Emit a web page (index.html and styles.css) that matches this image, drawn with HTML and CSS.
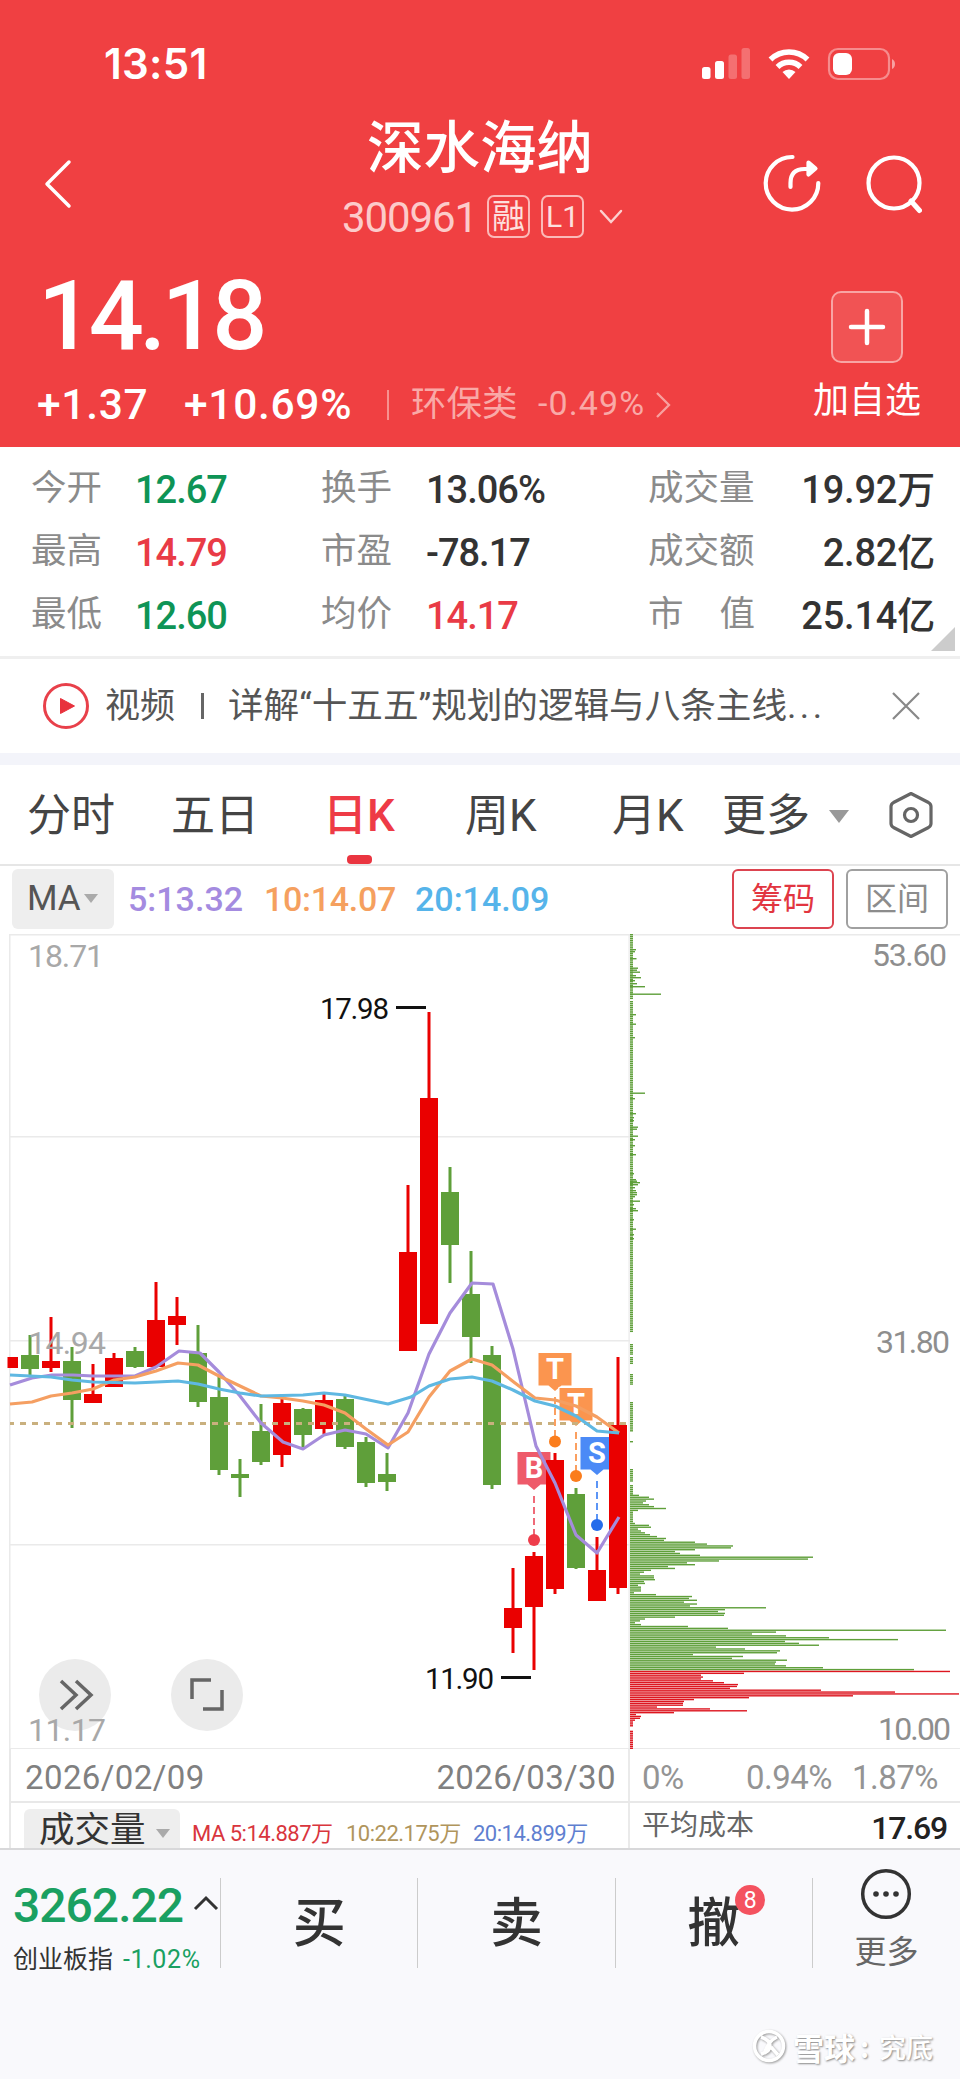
FILE: index.html
```html
<!DOCTYPE html>
<html lang="zh-CN">
<head>
    <meta charset="UTF-8">
    <meta name="viewport" content="width=device-width, initial-scale=1.0">
    <title>深水海纳 300961</title>
    <link rel="stylesheet" href="styles.css">
</head>
<body>
    <header>
        <div class="status-bar">
            <span class="clock">13:51</span>
            <svg class="status-icons" width="196" height="36" viewBox="700 46 196 36" fill="#fff">
                <rect x="702" y="67" width="8.500" height="12" rx="2.5"/>
                <rect x="715" y="61" width="9" height="18" rx="2.5"/>
                <rect x="728.500" y="54.500" width="8.500" height="24.500" rx="2.500" opacity="0.25"/>
                <rect x="741.500" y="48" width="8.500" height="31" rx="2.500" opacity="0.25"/>
                <path d="M789 79l-6.500-7a9.500 9.500 0 0 1 13 0z"/>
                <path d="M777.500 67a16.500 16.500 0 0 1 23 0M770.500 59.500a26.500 26.500 0 0 1 37 0" fill="none" stroke="#fff" stroke-width="5.500"/>
                <rect x="829" y="49" width="60" height="30" rx="9" fill="none" stroke="#fff" stroke-width="2.200" opacity="0.4"/>
                <rect x="833" y="53" width="19" height="22" rx="6"/>
                <path d="M892 59q3 1.500 3 5t-3 5z" opacity="0.5"/>
            </svg>
        </div>
        <div class="title-bar">
            <svg class="back" width="32" height="54" viewBox="0 0 32 54" fill="none" stroke="#fff" stroke-width="3.500" stroke-linecap="round" stroke-linejoin="round"><path d="M27 5L5 27l22 22"/></svg>
            <div class="stock">
                <h1>深水海纳</h1>
                <div class="stock-code">
                    <span class="code">300961</span>
                    <span class="tag">融</span>
                    <span class="tag tag-l1">L1</span>
                    <svg width="26" height="18" viewBox="0 0 26 18" fill="none" stroke="#fcd0cf" stroke-width="2.500" stroke-linecap="round"><path d="M3 3l10 11L23 3"/></svg>
                </div>
            </div>
            <svg class="tools" width="160" height="64" viewBox="762 152 160 64" fill="none" stroke="#fff" stroke-width="4.200" stroke-linecap="round" stroke-linejoin="round">
                <path d="M792.500 157a26.300 26.300 0 1 0 25.800 26"/>
                <path d="M790.500 187v-4q0-14 14-14h7M808.500 162.500l7 6-7 6z"/>
                <circle cx="894" cy="183" r="25.500"/>
                <path d="M911 201l8.500 9.500" stroke-width="5"/>
            </svg>
        </div>
        <div class="quote">
            <div class="price-box">
                <div class="price">14.18</div>
                <div class="change">
                    <span class="diff">+1.37</span>
                    <span class="percent">+10.69%</span>
                    <span class="line"></span>
                    <span class="sector">环保类</span>
                    <span class="sector-change">-0.49%</span>
                    <svg width="18" height="28" viewBox="0 0 18 28" fill="none" stroke="#f8a09f" stroke-width="2.300"><path d="M3 2l12 12L3 26"/></svg>
                </div>
            </div>
            <div class="add">
                <div class="add-icon">
                    <svg width="40" height="40" viewBox="0 0 40 40" stroke="#fff" stroke-width="4.500" stroke-linecap="round"><path d="M20 4v32M4 20h32"/></svg>
                </div>
                <span>加自选</span>
            </div>
        </div>
    </header>

    <section class="stats">
        <span class="label">今开</span><span class="value green">12.67</span>
        <span class="label">换手</span><span class="value">13.06%</span>
        <span class="label">成交量</span><span class="value right">19.92万</span>
        <span class="label">最高</span><span class="value red">14.79</span>
        <span class="label">市盈</span><span class="value">-78.17</span>
        <span class="label">成交额</span><span class="value right">2.82亿</span>
        <span class="label">最低</span><span class="value green">12.60</span>
        <span class="label">均价</span><span class="value red">14.17</span>
        <span class="label spread"><i>市</i><i>值</i></span><span class="value right">25.14亿</span>
        <span class="corner"></span>
    </section>

    <section class="video">
        <svg width="48" height="48" viewBox="0 0 48 48"><circle cx="24" cy="24" r="21.500" fill="none" stroke="#e8404a" stroke-width="3"/><path d="M18.500 16.500v15l14-7.500z" fill="#e8323d" stroke="#e8323d" stroke-linejoin="round"/></svg>
        <span class="video-tag">视频</span>
        <span class="video-line"></span>
        <span class="video-title">详解“十五五”规划的逻辑与八条主线<i>...</i></span>
        <svg width="30" height="30" viewBox="0 0 30 30" stroke="#888" stroke-width="2.200"><path d="M2 2l26 26M28 2L2 28"/></svg>
    </section>

    <nav class="tabs">
        <span>分时</span>
        <span>五日</span>
        <span class="active">日K</span>
        <span>周K</span>
        <span>月K</span>
        <span class="more">更多<i class="arrow"></i></span>
        <svg width="48" height="50" viewBox="0 0 48 50" fill="none" stroke="#666" stroke-width="3.200" stroke-linejoin="round"><path d="M24 3.500l17.500 9q2.500 1.500 2.500 4v17q0 2.500-2.500 4L24 46.500l-17.500-9Q4 36 4 33.500v-17q0-2.500 2.500-4z"/><circle cx="24" cy="25" r="6.500"/></svg>
    </nav>

    <section class="ma-row">
        <span class="ma-select">MA<i class="arrow"></i></span>
        <span class="ma ma5">5:13.32</span>
        <span class="ma ma10">10:14.07</span>
        <span class="ma ma20">20:14.09</span>
        <span class="btn btn-red">筹码</span>
        <span class="btn">区间</span>
    </section>

    <svg class="chart" id="chart" width="960" height="815" viewBox="0 934 960 815">
        <g fill="#eaeaea">
            <rect x="9" y="934" width="951" height="1.500"/>
            <rect x="9" y="1136" width="621" height="1.500"/>
            <rect x="9" y="1340" width="621" height="1.500"/>
            <rect x="9" y="1544" width="621" height="1.500"/>
            <rect x="9" y="1748" width="951" height="1"/>
            <rect x="9" y="934" width="1.500" height="815"/>
            <rect x="628.500" y="934" width="1.200" height="815"/>
        </g>
        <circle cx="75" cy="1695" r="36" fill="#ebebeb"/>
        <circle cx="207" cy="1695" r="36" fill="#ebebeb"/>
        <path class="tool-line" d="M61 1681l15 14-15 14M76 1681l15 14-15 14"/>
        <path class="tool-line" d="M192 1699v-19h19M222 1690v19h-19"/>
        <g id="markers"></g>
        <g id="candles"></g>
        <path d="M10 1423.500H627" stroke="#c9b07e" stroke-width="3" stroke-dasharray="6 6" stroke-dashoffset="2" fill="none"/>
        <g id="lines" fill="none" stroke-width="3.200" stroke-linejoin="round"></g>
        <g id="chips"></g>
        <path d="M396 1007.500h30M501 1677.500h30" stroke="#111" stroke-width="3"/>
        <g class="mark">
            <text x="320" y="1019" textLength="69">17.98</text>
            <text x="425" y="1689" textLength="69">11.90</text>
        </g>
        <g class="axis">
            <text x="28" y="967" textLength="76">18.71</text>
            <text x="28" y="1354" textLength="78">14.94</text>
            <text x="28" y="1741" textLength="78">11.17</text>
        </g>
        <g class="axis axis-right">
            <text x="872" y="966" textLength="75">53.60</text>
            <text x="876" y="1353" textLength="74">31.80</text>
            <text x="878" y="1740" textLength="73">10.00</text>
        </g>
    </svg>

    <section class="dates">
        <div class="dates-left"><span>2026/02/09</span><span>2026/03/30</span></div>
        <div class="dates-right"><span>0%</span><span>0.94%</span><span>1.87%</span></div>
    </section>

    <section class="volume">
        <div class="volume-left">
            <span class="volume-select">成交量<i class="arrow"></i></span>
            <span class="vol v5">MA 5:14.887万</span>
            <span class="vol v10">10:22.175万</span>
            <span class="vol v20">20:14.899万</span>
        </div>
        <div class="volume-right"><span>平均成本</span><b>17.69</b></div>
    </section>

    <footer>
        <div class="actions">
            <div class="index">
                <div class="index-value">3262.22<svg width="26" height="16" viewBox="0 0 26 16" fill="none" stroke="#333" stroke-width="3"><path d="M2 14L13 3l11 11"/></svg></div>
                <div class="index-name">创业板指<span>-1.02%</span></div>
            </div>
            <div class="action">买</div>
            <div class="action">卖</div>
            <div class="action"><span class="cancel">撤<em>8</em></span></div>
            <div class="action-more">
                <svg width="52" height="52" viewBox="0 0 52 52" fill="#333"><circle cx="26" cy="26" r="23.300" fill="none" stroke="#333" stroke-width="3.500"/><circle cx="16" cy="26" r="2.800"/><circle cx="26" cy="26" r="2.800"/><circle cx="36" cy="26" r="2.800"/></svg>
                <span>更多</span>
            </div>
        </div>
        <div class="brand">
            <svg width="38" height="38" viewBox="0 0 38 38" fill="none"><circle cx="19" cy="19" r="14.500" stroke="#fff" stroke-width="3.500"/><path d="M11 10q9 3 9 9t-9 8M27 10q-9 4-13 17M21 20l7 8" stroke="#fff" stroke-width="3.500"/></svg>
            <span class="brand-name">雪球</span><span class="brand-colon">:</span><span class="brand-user">究底</span>
        </div>
    </footer>

    <script>
        const RED = "#ea0000";
        const GREEN = "#5f9f3a";

        function add(parent, name, attrs) {
            const el = document.createElementNS("http://www.w3.org/2000/svg", name);
            for (const key in attrs) el.setAttribute(key, attrs[key]);
            document.getElementById(parent).appendChild(el);
            return el;
        }

        // color, high, low, body top, body bottom
        const candles = [
            ["r", 1357, 1368, 1357, 1368], ["g", 1335, 1375, 1355, 1369], ["r", 1317, 1372, 1361, 1368],
            ["g", 1347, 1428, 1361, 1400], ["r", 1364, 1403, 1394, 1403], ["r", 1353, 1387, 1358, 1387],
            ["g", 1347, 1368, 1351, 1367], ["r", 1282, 1367, 1320, 1367], ["r", 1297, 1345, 1316, 1325],
            ["g", 1325, 1407, 1353, 1402], ["g", 1375, 1475, 1397, 1470], ["g", 1459, 1497, 1474, 1478],
            ["g", 1404, 1465, 1431, 1462], ["r", 1399, 1467, 1403, 1455], ["g", 1408, 1447, 1409, 1435],
            ["r", 1394, 1434, 1400, 1429], ["g", 1395, 1449, 1399, 1447], ["g", 1437, 1487, 1442, 1483],
            ["g", 1453, 1491, 1474, 1482], ["r", 1185, 1351, 1252, 1351], ["r", 1012, 1324, 1098, 1324],
            ["g", 1167, 1283, 1192, 1245], ["g", 1251, 1363, 1294, 1337], ["g", 1346, 1489, 1355, 1485],
            ["r", 1568, 1653, 1608, 1628], ["r", 1552, 1670, 1556, 1607], ["r", 1453, 1594, 1460, 1589],
            ["g", 1488, 1569, 1494, 1568], ["r", 1537, 1601, 1570, 1601], ["r", 1357, 1594, 1425, 1588]
        ];
        candles.forEach((c, i) => {
            const x = 9 + i * 21;
            const left = Math.max(x - 9, 9);
            const fill = c[0] === "r" ? RED : GREEN;
            add("candles", "rect", { x: x - 1.5, y: c[1], width: 3, height: c[2] - c[1], fill: fill });
            add("candles", "rect", { x: left, y: c[3], width: x + 9 - left, height: c[4] - c[3], fill: fill });
        });

        // MA lines
        const lines = {
            "#a58cdb": "10,1385 32,1378 52,1375 73,1375 93,1376 135,1376 156,1367 179,1351 200,1353 219,1372 240,1396 261,1423 283,1442 303,1449 324,1435 345,1430 366,1434 388,1448 408,1413 429,1354 450,1313 472,1283 493,1284 513,1349 536,1446 555,1483 576,1535 597,1553 619,1517",
            "#f59f62": "10,1404 32,1402 51,1396 72,1393 93,1389 114,1380 135,1377 156,1371 178,1363 198,1365 219,1376 240,1386 261,1396 282,1398 303,1401 324,1405 345,1413 366,1429 388,1445 408,1432 429,1397 450,1371 472,1359 492,1365 515,1383 535,1398 555,1400 576,1406 597,1417 619,1433",
            "#5fb8e2": "10,1375 51,1377 72,1380 93,1382 135,1383 178,1381 198,1384 219,1389 240,1393 261,1396 303,1395 324,1393 345,1395 388,1404 411,1397 429,1386 450,1379 472,1377 492,1381 513,1390 535,1401 555,1406 576,1416 597,1431 619,1433"
        };
        for (const color in lines) add("lines", "polyline", { points: lines[color], stroke: color });

        // trade markers: letter, x, flag top, dot y, flag color, dot color
        const markers = [
            ["B", 534, 1452, 1540, "#ee5a6a", "#ee3d4b"],
            ["T", 555, 1353, 1441.5, "#fb954f", "#fb7d1c"],
            ["T", 576, 1388, 1476, "#fb954f", "#fb7d1c"],
            ["S", 597, 1437, 1525, "#4b8af6", "#256ceb"]
        ];
        markers.forEach(m => {
            const x = m[1], y = m[2];
            add("markers", "path", {
                d: `M${x - 16.5} ${y}h33v32.500h-10l-6.500 5.500l-6.500-5.500h-10z`,
                fill: m[4], stroke: "#fff", "stroke-width": 2.5, "stroke-linejoin": "round", "paint-order": "stroke"
            });
            add("markers", "path", { d: `M${x} ${y + 44}V${m[3] - 4}`, stroke: m[4], "stroke-width": 1.8, "stroke-dasharray": "7 4" });
            add("markers", "circle", { cx: x, cy: m[3], r: 6, fill: m[5] });
            const t = add("markers", "text", { x: x, y: y + 26, class: "flag" });
            t.textContent = m[0];
        });

        // chips distribution
        const STEP = 1.873;
        function chip(y, w, color) {
            add("chips", "rect", { x: 630, y: y, width: w, height: 1.4, fill: color });
        }
        const ranges = [[934, 998], [1001, 1331], [1344, 1355], [1357, 1363], [1374, 1384], [1402, 1431], [1441, 1442], [1469, 1482], [1485, 1495]];
        ranges.forEach(r => {
            for (let y = r[0]; y < r[1]; y += STEP) chip(y, 3, GREEN);
        });
        const spikes = [
            [949, 6], [951, 5], [958, 6.5], [967.5, 8], [969.5, 7], [971.5, 10], [975, 6], [977, 11], [980, 5], [983, 7],
            [986, 15], [993.5, 31], [1014, 6], [1023.5, 6], [1037, 5], [1092.5, 15], [1098, 5], [1113, 6], [1117, 4],
            [1120, 4], [1126.5, 8], [1128.5, 7], [1135.5, 8], [1139, 5], [1145, 5], [1154, 6], [1173, 4], [1179, 6],
            [1180.5, 7], [1182, 10], [1184, 8], [1187, 5], [1190, 6], [1192, 7], [1194, 7], [1196, 5], [1200.5, 10],
            [1204, 4], [1208, 6], [1210, 8], [1219, 4], [1228.5, 6], [1234, 4], [1238, 4]
        ];
        spikes.forEach(s => chip(s[0], s[1], GREEN));

        const above = [9, 19, 24, 16, 13, 19, 24, 36, 8, 3, 3, 3, 3, 3, 3, 5, 19, 21, 8, 11, 15, 20, 27, 36, 34, 65, 77, 103, 101,
            65, 45, 50, 70, 183, 178, 89, 57, 65, 38, 45, 21, 14, 10, 24, 24, 25, 14, 15, 8, 11, 11, 11, 4, 26, 62, 59, 67,
            54, 67, 60, 136, 95, 88, 95, 94, 45, 15, 10, 5, 11, 58, 98, 316, 146, 122, 156, 199, 268, 155, 169, 189, 86,
            115, 150, 147, 63, 113, 102, 157, 146, 145, 156, 193, 284];
        const below = [320, 114, 71, 73, 71, 83, 94, 108, 107, 100, 191, 265, 329, 223, 119, 64, 54, 53, 53, 27, 80, 117, 44, 6,
            11, 10, 5, 3, 3, 3, 0, 0, 3, 3, 3, 3, 3, 3, 3, 3, 3, 3, 3];
        above.forEach((w, i) => chip(1494.7 + i * STEP, w, GREEN));
        below.forEach((w, i) => chip(1494.7 + (above.length + i) * STEP, w, "#dd1620"));
    </script>
</body>
</html>
```

FILE: styles.css
```css
* {
    box-sizing: border-box;
}
body {
    margin: 0;
    width: 960px;
    background: #fff;
    color: #333;
    font-family: Roboto, "Noto Sans CJK SC", sans-serif;
    line-height: 1;
}
i, em {
    font-style: normal;
}
span {
    white-space: nowrap;
}
header {
    height: 447px;
    background: #f04042;
    color: #fff;
}
.status-bar {
    display: flex;
    justify-content: space-between;
    align-items: center;
    height: 128px;
    padding: 0 64px 0 104px;
}
.clock {
    font-family: Inter, sans-serif;
    font-size: 42px;
    font-weight: 600;
    letter-spacing: 0.300px;
}
.title-bar {
    display: grid;
    grid-template-columns: 330px 1fr 160px;
    height: 144px;
    padding: 0 38px 0 42px;
}
.title-bar .back {
    margin-top: 29px;
}
.title-bar .tools {
    margin-top: 24px;
}
.stock {
    width: 400px;
    margin-left: -92px;
}
h1 {
    margin: -13px 0 0;
    text-align: center;
    font-family: "Noto Sans CJK SC", sans-serif;
    font-size: 56.500px;
    font-weight: 500;
}
.stock-code {
    display: flex;
    align-items: center;
    margin: 23px 0 0 62px;
    height: 44px;
}
.code {
    width: 145px;
    padding-top: 3px;
    font-size: 42px;
    letter-spacing: -1.100px;
    color: #fccbca;
}
.tag {
    display: flex;
    align-items: center;
    justify-content: center;
    width: 43px;
    height: 43px;
    margin-right: 11px;
    border: 2px solid #fbb9b8;
    border-radius: 7px;
    font-size: 33px;
    color: #fde0df;
}
.tag-l1 {
    font-size: 30px;
    margin-right: 14px;
}
.quote {
    display: flex;
    justify-content: space-between;
    padding: 0 39px 0 37px;
}
.price {
    margin: -4px 0 0 1px;
    font-size: 97px;
    font-weight: 500;
    letter-spacing: -4.500px;
}
.change {
    display: flex;
    align-items: center;
    height: 44px;
    margin-top: 18px;
}
.diff, .percent {
    font-size: 42.500px;
    font-weight: 500;
    letter-spacing: 0.700px;
}
.diff {
    width: 147px;
}
.percent {
    width: 203px;
}
.line {
    width: 2px;
    height: 30px;
    margin-right: 22px;
    background: #f7918f;
}
.sector {
    width: 127px;
    font-size: 35.500px;
    color: #f9a9a7;
}
.sector-change {
    width: 116px;
    padding-bottom: 4px;
    font-size: 34px;
    letter-spacing: 1.100px;
    color: #f9a9a7;
}
.add {
    display: flex;
    flex-direction: column;
    align-items: center;
    padding-top: 19px;
    font-size: 36px;
}
.add-icon {
    display: flex;
    align-items: center;
    justify-content: center;
    width: 72px;
    height: 72px;
    margin: 0 0 20px 0;
    border: 2px solid #f8a5a4;
    border-radius: 10px;
    background: #f15354;
}
.stats {
    position: relative;
    display: grid;
    grid-template-columns: 104px 186px 105px 222px 119px 1fr;
    grid-auto-rows: 63px;
    align-items: center;
    height: 212px;
    padding: 10px 25px 0 31px;
    border-bottom: 3px solid #efefef;
}
.label {
    font-size: 35.500px;
    color: #8b8b8b;
}
.spread {
    display: flex;
    justify-content: space-between;
    width: 107px;
}
.value {
    font-size: 38px;
    font-weight: 500;
    letter-spacing: -1px;
    padding-top: 3px;
}
.right {
    letter-spacing: -0.200px;
    text-align: right;
}
.green {
    color: #0e9456;
}
.red {
    color: #e93b46;
}
.corner {
    position: absolute;
    right: 5px;
    bottom: 5px;
    border-left: 24px solid transparent;
    border-bottom: 24px solid #ccc;
}
.video {
    display: flex;
    align-items: center;
    height: 94px;
    padding-left: 42px;
    font-size: 35px;
    color: #555;
}
.video-tag {
    margin-left: 15px;
}
.video-line {
    width: 3px;
    height: 26px;
    margin: 0 24px 0 26px;
    background: #666;
}
.video-title {
    width: 663px;
    padding-top: 2px;
    font-size: 35.600px;
}
.video-title i {
    letter-spacing: 3.500px;
}
.tabs {
    display: grid;
    grid-template-columns: 144px 152px 142px 147px 110px 165px 1fr;
    align-items: center;
    height: 113px;
    padding: 0 0 0 27px;
    border-top: 12px solid #f3f4fa;
    border-bottom: 2px solid #e6e6e6;
    font-size: 44px;
    color: #444;
}
.tabs span {
    position: relative;
    top: 1px;
}
.active {
    color: #ee3b46;
    font-weight: 500;
}
.active::after {
    content: "";
    position: absolute;
    left: 24px;
    bottom: -26px;
    width: 25px;
    height: 9px;
    border-radius: 4px;
    background: #ea3540;
}
.arrow {
    display: inline-block;
    border: 7px solid transparent;
    border-top: 9px solid #aaa;
    border-bottom: 0;
}
.more .arrow {
    margin: 0 0 8px 19px;
    border-width: 13px 10px 0;
    border-top-color: #999;
}
.ma-row {
    display: flex;
    align-items: center;
    height: 68px;
    padding: 0 12px 3px;
}
.ma-select {
    display: flex;
    align-items: center;
    width: 102px;
    height: 60px;
    margin-right: 14px;
    padding-left: 15px;
    border-radius: 6px;
    background: #eee;
    font-size: 35px;
    color: #555;
}
.ma-select .arrow {
    margin-left: 3px;
}
.ma {
    padding-top: 1px;
    font-size: 34px;
    font-weight: 500;
}
.ma5 {
    width: 136px;
    color: #a48be0;
}
.ma10 {
    width: 151px;
    letter-spacing: -0.300px;
    color: #f5a05f;
}
.ma20 {
    width: 317px;
    color: #56b4ea;
}
.btn {
    display: flex;
    align-items: center;
    justify-content: center;
    flex-shrink: 0;
    width: 102px;
    height: 60px;
    border: 2px solid #a0a0a0;
    border-radius: 6px;
    font-size: 32px;
    color: #8c8c8c;
}
.btn-red {
    margin-right: 12px;
    border-color: #dc4450;
    color: #e23540;
}
.chart {
    display: block;
}
.tool-line {
    fill: none;
    stroke: #666;
    stroke-width: 3.500px;
}
.flag {
    fill: #fff;
    font-size: 29px;
    font-weight: 700;
    text-anchor: middle;
}
.mark {
    font-size: 29.500px;
    fill: #111;
}
.axis {
    font-size: 32px;
    fill: #a8a8a8;
}
.axis-right {
    fill: #8e8e8e;
}
.dates {
    display: flex;
    height: 54px;
    margin-left: 9px;
    border-bottom: 2px solid #e8e8e8;
    border-left: 2px solid #e8e8e8;
    font-size: 33px;
    color: #808080;
}
.dates-left {
    display: flex;
    align-items: center;
    justify-content: space-between;
    width: 619px;
    padding: 4px 12px 0 14px;
    border-right: 2px solid #eaeaea;
    letter-spacing: 0.400px;
}
.dates-right {
    display: grid;
    grid-template-columns: 104px 106px 1fr;
    align-items: center;
    padding: 4px 0 0 12px;
    color: #949494;
}
.dates-right span {
    letter-spacing: -0.500px;
}
.volume {
    display: flex;
    height: 45px;
    margin-left: 9px;
    border-left: 2px solid #e8e8e8;
}
.volume-left {
    display: flex;
    width: 619px;
    padding: 6px 0 0 13px;
    border-right: 2px solid #eaeaea;
}
.volume-select {
    width: 156px;
    height: 39px;
    margin-right: 12px;
    padding: 4px 0 0 15px;
    border-radius: 6px 6px 0 0;
    background: #eee;
    font-size: 35.500px;
    line-height: 35px;
}
.volume-select .arrow {
    margin: 0 0 4px 10px;
}
.vol {
    padding-top: 14px;
    font-size: 22px;
    letter-spacing: -0.500px;
}
.v5 {
    width: 154px;
    color: #d9353d;
}
.v10 {
    width: 127px;
    color: #b0955c;
}
.v20 {
    color: #5f7fd0;
}
.volume-right {
    display: flex;
    flex: 1;
    justify-content: space-between;
    padding: 9px 13px 0 12px;
    font-size: 28px;
    color: #666;
}
.volume-right b {
    font-size: 32px;
    font-weight: 500;
    letter-spacing: -1.200px;
    color: #222;
}
footer {
    height: 231px;
    border-top: 2px solid #d8d8da;
    background: #f9f9fc;
}
.actions {
    display: flex;
    height: 118px;
    padding-top: 28px;
}
.index {
    width: 221px;
    padding-left: 13px;
    border-right: 1px solid #ccc;
}
.index-value {
    display: flex;
    padding-top: 4px;
    font-size: 48px;
    font-weight: 500;
    letter-spacing: -1px;
    color: #1aa061;
}
.index-value svg {
    flex-shrink: 0;
    margin: 13px 0 0 10px;
}
.index-name {
    display: flex;
    align-items: center;
    margin-top: 17px;
    font-size: 25px;
    color: #333;
}
.index-name span {
    margin-left: 10px;
    letter-spacing: 0.600px;
    color: #1aa061;
}
.action {
    display: flex;
    align-items: center;
    justify-content: center;
    width: 197.300px;
    padding-top: 2px;
    border-right: 1px solid #ccc;
    font-size: 53px;
    font-weight: 500;
}
.cancel {
    position: relative;
}
.cancel em {
    position: absolute;
    top: -13px;
    right: -25px;
    width: 30px;
    height: 30px;
    border-radius: 50%;
    background: #f4525f;
    color: #fff;
    font-size: 23px;
    font-weight: 400;
    line-height: 31px;
    text-align: center;
}
.action-more {
    flex: 1;
    display: flex;
    flex-direction: column;
    align-items: center;
    margin-top: -10px;
    font-size: 32px;
    color: #666;
}
.action-more svg {
    margin-bottom: 16px;
}
.brand {
    display: flex;
    align-items: center;
    height: 40px;
    margin: 58px 0 0 750px;
    font-family: "Noto Sans CJK SC", sans-serif;
    font-weight: 700;
    color: #fff;
    text-shadow: 1px 1px 2px #888;
}
.brand svg {
    filter: drop-shadow(1px 1px 1px #999);
}
.brand-name {
    margin-left: 5px;
    font-size: 31px;
}
.brand-colon {
    width: 24px;
    padding-left: 5px;
    font-size: 28px;
}
.brand-user {
    font-size: 27px;
    font-weight: 500;
}
```
